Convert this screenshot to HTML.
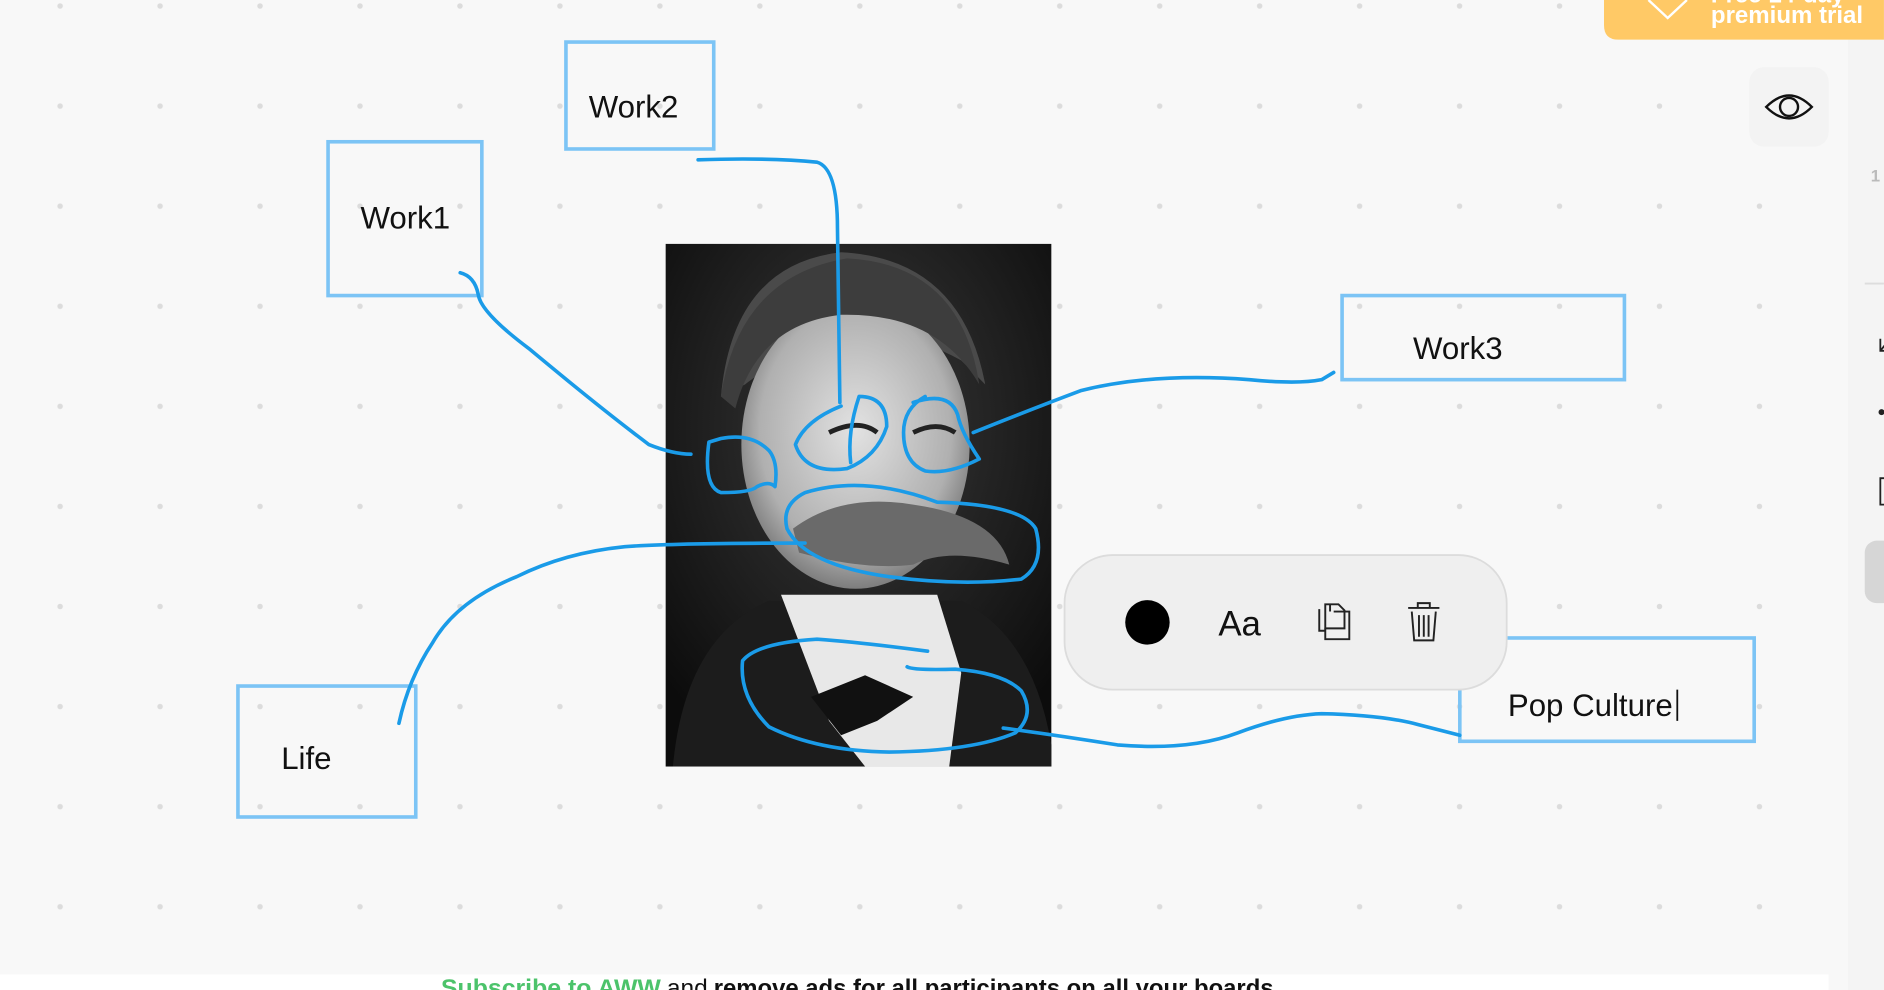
<!DOCTYPE html>
<html><head><meta charset="utf-8"><style>
html,body{margin:0;padding:0;background:#f8f8f8;overflow:hidden}
svg{display:block}
</style></head><body>
<svg width="1884" height="990" viewBox="0 0 1568 824" xmlns="http://www.w3.org/2000/svg" font-family="Liberation Sans, sans-serif">
<defs>
<pattern id="dots" x="50" y="5" width="83.2" height="83.3" patternUnits="userSpaceOnUse">
<circle cx="0" cy="0" r="2.3" fill="#dcdcdc"/><circle cx="83.2" cy="0" r="2.3" fill="#dcdcdc"/><circle cx="0" cy="83.3" r="2.3" fill="#dcdcdc"/><circle cx="83.2" cy="83.3" r="2.3" fill="#dcdcdc"/>
</pattern>
<radialGradient id="bg" cx="0.5" cy="0.35" r="0.7"><stop offset="0" stop-color="#3a3a3a"/><stop offset="1" stop-color="#0c0c0c"/></radialGradient>
<radialGradient id="face" cx="0.5" cy="0.45" r="0.6"><stop offset="0" stop-color="#e2e2e2"/><stop offset="0.7" stop-color="#b0b0b0"/><stop offset="1" stop-color="#6a6a6a"/></radialGradient>
</defs>
<rect width="1568" height="824" fill="#f8f8f8"/>
<rect x="0" y="0" width="1540" height="811" fill="url(#dots)"/>
<rect x="1538" y="0" width="30" height="824" fill="#f4f4f4"/>
<line x1="1552" y1="236" x2="1568" y2="236" stroke="#ddd" stroke-width="1.5"/>
<text x="1557" y="151" font-size="14" fill="#bbb" font-weight="bold">1</text>
<path d="M1565 282 v10 h4 M1565 292 l4 -5" stroke="#222" stroke-width="1.5" fill="none"/>
<circle cx="1566" cy="343" r="2.5" fill="#222"/>
<path d="M1569 398 h-4 v22 h4" stroke="#222" stroke-width="1.5" fill="none"/>
<rect x="1552" y="450" width="30" height="52" rx="10" fill="#d6d6d6"/>
<rect x="1456" y="56" width="66" height="66" rx="12" fill="#f3f3f3"/>
<path d="M1470 89 Q1489 70 1508 89 Q1489 108 1470 89 Z" fill="none" stroke="#111" stroke-width="2"/>
<circle cx="1489" cy="89" r="7.5" fill="none" stroke="#111" stroke-width="2"/>
<path d="M1335 0 H1568 V33 H1347 Q1335 33 1335 21 Z" fill="#ffc966"/>
<path d="M1372 0 L1388 15 L1404 0" stroke="#fff" stroke-width="2" fill="none"/>
<text x="1424" y="19" font-size="20" font-weight="bold" fill="#fff">premium trial</text>
<text x="1424" y="2" font-size="20" font-weight="bold" fill="#fff">Free 14-day</text>
<rect x="554" y="203" width="321" height="435" fill="url(#bg)"/>
<path d="M600 330 Q610 220 700 210 Q800 215 820 320 L800 300 Q710 250 620 320 Z" fill="#4a4a4a"/>
<ellipse cx="712" cy="370" rx="95" ry="120" fill="url(#face)"/>
<path d="M600 330 Q615 230 705 215 Q800 220 815 320 Q780 260 700 262 Q630 270 612 340 Z" fill="#3d3d3d"/>
<path d="M660 440 Q700 410 760 420 Q830 430 840 470 Q790 455 760 470 Q720 475 665 460 Z" fill="#6a6a6a"/>
<path d="M560 638 Q570 530 640 500 L700 500 L712 520 L740 500 L800 500 Q860 530 875 620 L875 638 Z" fill="#1c1c1c"/>
<path d="M650 495 L690 600 L720 638 L790 638 L800 560 L780 495 Z" fill="#e8e8e8"/>
<path d="M675 580 L720 562 L760 580 L730 600 L700 612 Z" fill="#111"/>
<path d="M690 360 q25 -12 40 0 M760 360 q20 -10 35 0" stroke="#222" stroke-width="4" fill="none"/>
<g fill="none" stroke="#7cc4f5" stroke-width="3">
<rect x="471" y="35" width="123" height="89"/>
<rect x="273" y="118" width="128" height="128"/>
<rect x="1117" y="246" width="235" height="70"/>
<rect x="198" y="571" width="148" height="109"/>
<rect x="1215" y="531" width="245" height="86"/>
</g>
<g font-size="26" fill="#111">
<text x="490" y="98">Work2</text>
<text x="300" y="190">Work1</text>
<text x="1176" y="299">Work3</text>
<text x="234" y="640">Life</text>
<text x="1255" y="596">Pop Culture</text>
</g>
<line x1="1396" y1="574" x2="1396" y2="600" stroke="#111" stroke-width="1.5"/>
<g fill="none" stroke="#1a9be8" stroke-width="3" stroke-linecap="round" stroke-linejoin="round">
<path d="M581 133 Q640 131 680 135 Q697 140 697 190 L699 335"/>
<path d="M383 227 Q395 230 398 245 Q400 260 440 290 Q500 340 540 370 Q560 378 575 378"/>
<path d="M590 368 Q585 405 600 410 Q625 410 630 405 Q640 400 645 405 Q648 385 640 375 Q625 360 600 365 Z"/>
<path d="M700 338 Q670 350 662 370 Q670 395 705 390 Q730 380 738 355 Q738 330 715 330 Q705 360 708 385"/>
<path d="M760 335 Q790 325 797 345 Q800 360 815 382 Q790 395 770 392 Q752 385 752 360 Q752 340 770 330"/>
<path d="M810 360 Q860 340 900 325 Q960 310 1040 316 Q1080 320 1100 316 L1110 310"/>
<path d="M670 410 Q720 395 780 418 Q850 420 862 440 Q870 470 850 482 Q800 488 740 480 Q670 470 655 440 Q650 420 670 410"/>
<path d="M670 452 Q560 452 520 455 Q470 460 430 480 Q380 500 360 535 Q340 565 332 602"/>
<path d="M772 542 Q720 535 680 532 Q630 535 618 550 Q615 580 640 605 Q680 625 740 626 Q810 625 845 610 Q862 595 850 575 Q835 560 795 557 Q760 558 755 555"/>
<path d="M835 606 Q880 612 930 620 Q990 625 1030 610 Q1070 595 1100 594 Q1150 595 1180 603 L1215 612"/>
</g>
<rect x="886" y="462" width="368" height="112" rx="40" fill="#efefef" stroke="#dcdcdc" stroke-width="1.5"/>
<circle cx="955" cy="518" r="18.5" fill="#000"/>
<text x="1014" y="529" font-size="29" fill="#111">Aa</text>
<g fill="none" stroke="#222" stroke-width="1.6">
<path d="M1103 503 h11 l5 5 v15 h-16 Z"/>
<path d="M1107 509 v-6 M1110 509 h13 v23 h-20 v-9"/>
<path d="M1098 507 v18 h5"/>
<path d="M1172 506 h26 M1180 506 v-4 h10 v4 M1175 509 l2 24 h16 l2 -24 M1181 512 v18 M1185 512 v18 M1189 512 v18"/>
</g>
<rect x="0" y="811" width="1522" height="13" fill="#fff"/>
<text x="367" y="829" font-size="20" font-weight="bold" fill="#4cc36b" textLength="183" lengthAdjust="spacingAndGlyphs">Subscribe to AWW</text>
<text x="555" y="829" font-size="20" fill="#111" textLength="34" lengthAdjust="spacingAndGlyphs">and</text>
<text x="594" y="829" font-size="20" font-weight="bold" fill="#111" textLength="466" lengthAdjust="spacingAndGlyphs">remove ads for all participants on all your boards</text>
</svg>
</body></html>
